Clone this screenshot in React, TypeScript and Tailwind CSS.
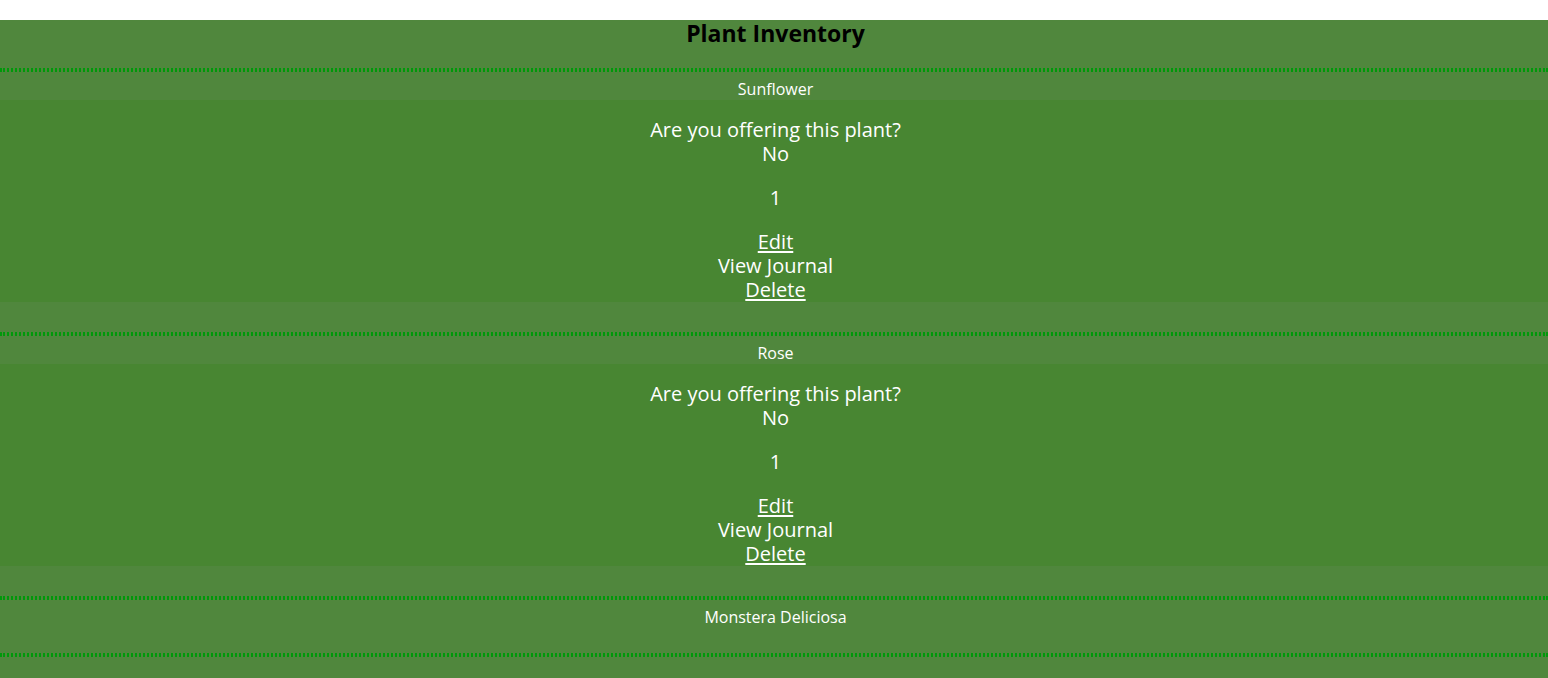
import React from "react";

const plants = [
  { name: "Sunflower", details: true },
  { name: "Rose", details: true },
  { name: "Monstera Deliciosa", details: false },
];

function Card({ name, details }: { name: string; details: boolean }) {
  return (
    <section className={`border-y-2 border-dotted border-[#00990a] ${details ? "pb-[30px]" : "pb-[25px]"}`}>
      <div className="h-[28px] pl-[3px] pt-[7px] text-[16px] leading-[20px] text-white">{name}</div>
      {details && (
        <div className="bg-[#488632] pl-[3px] pt-[18px] text-[20px] leading-[24px] text-white">
          <p>Are you offering this plant?</p>
          <p>No</p>
          <p className="mt-[20px]">1</p>
          <div className="mt-[20px] flex flex-col items-center">
            <a className="underline underline-offset-2">Edit</a>
            <span>View Journal</span>
            <a className="underline underline-offset-2">Delete</a>
          </div>
        </div>
      )}
    </section>
  );
}

export default function App() {
  return (
    <div className="min-h-[678px] bg-white pt-[20px]" style={{ fontFamily: '"Open Sans", "Noto Sans", sans-serif' }}>
      <div className="min-h-[658px] bg-[#50873d] text-center">
        <header className="border-b-2 border-dotted border-[#00990a] pb-[22px] pl-[3px]">
          <h1 className="text-[23px] font-bold leading-[26px] text-black">Plant Inventory</h1>
        </header>
        {plants.map((p) => (
          <Card key={p.name} name={p.name} details={p.details} />
        ))}
        <div className="border-t-2 border-dotted border-[#00990a]" />
      </div>
    </div>
  );
}
